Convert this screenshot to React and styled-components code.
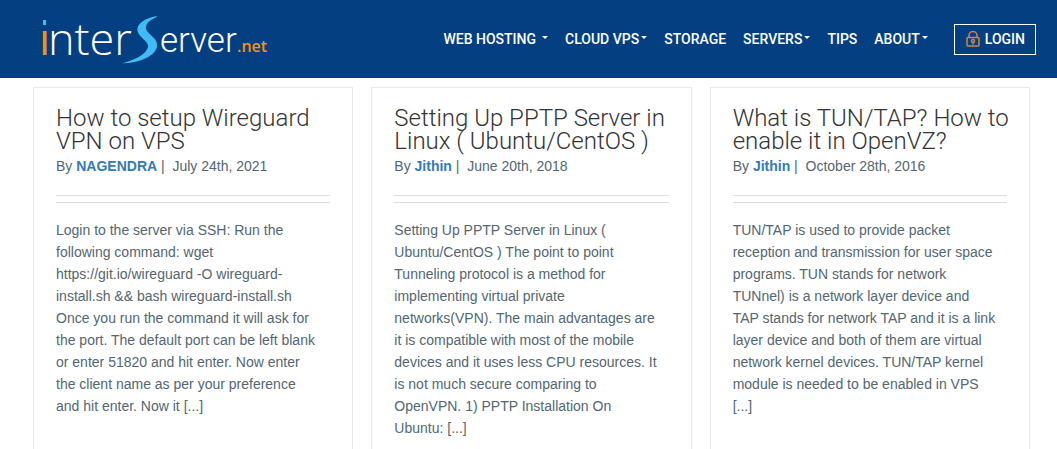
import styled, { createGlobalStyle } from 'styled-components';

const GlobalStyle = createGlobalStyle`
  * {
    box-sizing: border-box;
  }

  body {
    margin: 0;
    background: #fff;
    color: #54666f;
    font-family: 'Liberation Sans', Arial, sans-serif;
    font-size: 14px;
    overflow-x: hidden;
  }
`;

const Header = styled.header`
  display: flex;
  align-items: center;
  justify-content: space-between;
  height: 78px;
  padding: 0 21px 0 36px;
  background: #043f82;
`;

const LogoLink = styled.a`
  display: block;
  line-height: 0;
`;

const Nav = styled.nav`
  display: flex;
  align-items: center;
  font-family: Roboto, sans-serif;
  font-size: 14px;
  font-weight: 500;
`;

const Menu = styled.ul`
  display: flex;
  gap: 17px;
  margin: 0 26px 0 0;
  padding: 0;
  list-style: none;
`;

const MenuLink = styled.a`
  display: flex;
  align-items: center;
  gap: ${({ $wide }) => ($wide ? '6px' : '2px')};
  color: #fff;
  line-height: 20px;
  text-decoration: none;
  white-space: nowrap;
`;

const Caret = styled.span`
  border: 3px solid transparent;
  border-top-color: #fff;
  border-bottom: 0;
  margin-bottom: 4px;
`;

const LoginLink = styled.a`
  display: flex;
  align-items: center;
  gap: 5px;
  height: 31px;
  padding: 0 10px 0 11px;
  border: 1px solid #fff;
  color: #fff;
  text-decoration: none;
`;

const Posts = styled.main`
  display: grid;
  grid-template-columns: repeat(3, 1fr);
  gap: 18px;
  padding: 9px 27px 0 33px;
`;

const Post = styled.article`
  min-height: 380px;
  padding: 19px 22px;
  border: 1px solid #e9e9e9;
`;

const Title = styled.h2`
  margin: 0 -8px 0 0;
  color: #333;
  font-family: Roboto, sans-serif;
  font-size: 24px;
  font-weight: 300;
  line-height: 23px;
`;

const TitleLink = styled.a`
  color: inherit;
  text-decoration: none;
`;

const Meta = styled.p`
  margin: 3px 0 19px;
  line-height: 20px;
  white-space: pre-wrap;
`;

const AuthorLink = styled.a`
  color: #337ab7;
  font-weight: 700;
  text-decoration: none;
`;

const Separator = styled.div`
  height: 8px;
  border: 1px solid #dcdcdc;
  border-width: 1px 0;
`;

const Excerpt = styled.p`
  margin: 16px 0 0;
  padding-right: 11px;
  line-height: 22px;
`;

const menu = [
  { label: 'WEB HOSTING', caret: true, wide: true },
  { label: 'CLOUD VPS', caret: true },
  { label: 'STORAGE' },
  { label: 'SERVERS', caret: true },
  { label: 'TIPS' },
  { label: 'ABOUT', caret: true },
];

const posts = [
  {
    title: 'How to setup Wireguard VPN on VPS',
    author: 'NAGENDRA',
    date: 'July 24th, 2021',
    excerpt: 'Login to the server via SSH: Run the following command: wget https://git.io/wireguard -O wireguard-install.sh && bash wireguard-install.sh Once you run the command it will ask for the port. The default port can be left blank or enter 51820 and hit enter. Now enter the client name as per your preference and hit enter. Now it [...]',
  },
  {
    title: 'Setting Up PPTP Server in Linux ( Ubuntu/CentOS )',
    author: 'Jithin',
    date: 'June 20th, 2018',
    excerpt: 'Setting Up PPTP Server in Linux ( Ubuntu/CentOS ) The point to point Tunneling protocol is a method for implementing virtual private networks(VPN). The main advantages are it is compatible with most of the mobile devices and it uses less CPU resources. It is not much secure comparing to OpenVPN. 1) PPTP Installation On Ubuntu: [...]',
  },
  {
    title: 'What is TUN/TAP? How to enable it in OpenVZ?',
    author: 'Jithin',
    date: 'October 28th, 2016',
    excerpt: 'TUN/TAP is used to provide packet reception and transmission for user space programs. TUN stands for network TUNnel) is a network layer device and TAP stands for network TAP and it is a link layer device and both of them are virtual network kernel devices. TUN/TAP kernel module is needed to be enabled in VPS [...]',
  },
];

const Logo = () => (
  <svg width="240" height="78" viewBox="36 0 240 78" role="img" aria-label="InterServer.net">
    <rect x="43" y="20" width="3" height="5" fill="#3fbcf5" />
    <g fontFamily="'Open Sans', sans-serif">
      <text x="39" y="55" fontSize="44" fontWeight="400" fill="#f39314">ı</text>
      <text x="48" y="55" fontSize="45" fontWeight="300" fill="#fff">nter</text>
      <text x="160" y="52" fontSize="35" fontFamily="Roboto, sans-serif" fontWeight="300" fill="#fff">erver</text>
      <text x="237" y="52" fontSize="16" fontWeight="600" fill="#f39314">.net</text>
    </g>
    <path
      d="M156.500 16 C145 18 136 24 137.500 31 C139 38 149 41 148 47 C146 55 134 60 122 63.500 C136 63 154 58 157 47 C159 38 146 34 146 28 C146 23 150 20 156.500 17 Z"
      fill="#3fbcf5"
    />
  </svg>
);

const LockIcon = () => (
  <svg width="14" height="16" viewBox="0 0 14 16" fill="none" stroke="#c68a4c" strokeWidth="1.5" aria-hidden="true">
    <path d="M3 7V4.500a4 4 0 0 1 8 0V7" />
    <rect x="1" y="6.500" width="12" height="8.500" rx="1" />
    <circle cx="7" cy="10" r="1.500" />
    <path d="M7 11.500v2" />
  </svg>
);

const App = () => (
  <>
    <GlobalStyle />
    <Header>
      <LogoLink href="#home">
        <Logo />
      </LogoLink>
      <Nav>
        <Menu>
          {menu.map((item) => (
            <li key={item.label}>
              <MenuLink href="#menu" $wide={item.wide}>
                {item.label}
                {item.caret && <Caret />}
              </MenuLink>
            </li>
          ))}
        </Menu>
        <LoginLink href="#login">
          <LockIcon />
          LOGIN
        </LoginLink>
      </Nav>
    </Header>
    <Posts>
      {posts.map((post) => (
        <Post key={post.title}>
          <Title>
            <TitleLink href="#post">{post.title}</TitleLink>
          </Title>
          <Meta>
            {'By '}
            <AuthorLink href="#author">{post.author}</AuthorLink>
            {` |  ${post.date}`}
          </Meta>
          <Separator />
          <Excerpt>{post.excerpt}</Excerpt>
        </Post>
      ))}
    </Posts>
  </>
);

export default App;
